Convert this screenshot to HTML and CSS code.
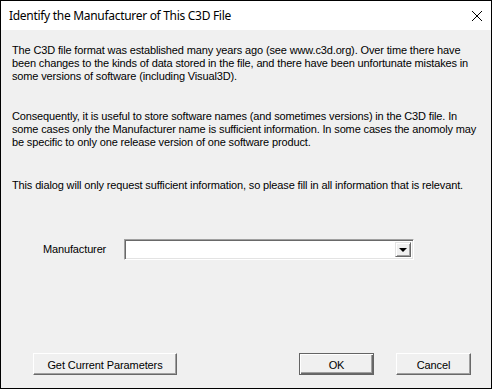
FILE: index.html
```html
<!DOCTYPE html>
<html>
<head>
<meta charset="utf-8">
<link rel="stylesheet" href="styles.css">
</head>
<body>
<div class="window">
  <div class="titlebar">
    <span class="title">Identify the Manufacturer of This C3D File</span>
    <svg class="close" width="12" height="12" viewBox="0 0 12 12"><path d="M1 1 L11 11 M11 1 L1 11" stroke="#000" stroke-width="1" fill="none"/></svg>
  </div>
  <div class="content">
    <p class="para p1">The C3D file format was established many years ago (see www.c3d.org). Over time there have been changes to the kinds of data stored in the file, and there have been unfortunate mistakes in some versions of software (including Visual3D).</p>
    <p class="para p2">Consequently, it is useful to store software names (and sometimes versions) in the C3D file. In some cases only the Manufacturer name is sufficient information. In some cases the anomoly may be specific to only one release version of one software product.</p>
    <p class="para p3">This dialog will only request sufficient information, so please fill in all information that is relevant.</p>
    <div class="field-row">
      <label class="label">Manufacturer</label>
      <div class="combo">
        <div class="combo-text"></div>
        <div class="combo-btn"><span class="arrow"></span></div>
      </div>
    </div>
    <div class="button-row">
      <button class="btn btn-get">Get Current Parameters</button>
      <div class="spacer"></div>
      <button class="btn btn-ok">OK</button>
      <button class="btn btn-cancel">Cancel</button>
    </div>
  </div>
</div>
</body>
</html>
```
FILE: styles.css
```css
html, body {
  margin: 0;
  padding: 0;
  background: #f0f0f0;
}
.window {
  width: 492px;
  height: 389px;
  box-sizing: border-box;
  border: 1px solid #000;
  background: #f0f0f0;
  display: flex;
  flex-direction: column;
}
.titlebar {
  height: 29px;
  background: #fff;
  display: flex;
  align-items: center;
  padding-left: 8px;
  padding-right: 8px;
  flex-shrink: 0;
}
.title {
  font-family: "Noto Sans", sans-serif;
  font-size: 12px;
  letter-spacing: -0.3px;
  color: #000;
  flex: 1;
}
.close {
  display: block;
}
.content {
  flex: 1;
  padding: 14px 11px 0 11px;
  font-family: "Liberation Sans", sans-serif;
  font-size: 11px;
  letter-spacing: -0.14px;
  line-height: 13px;
  color: #000;
  display: flex;
  flex-direction: column;
}
.para {
  margin: 0;
}
.p2 { margin-top: 27px; }
.p3 { margin-top: 30px; }
.field-row {
  display: flex;
  align-items: center;
  margin-top: 47px;
  padding-left: 31px;
}
.label {
  width: 81px;
}
.combo {
  width: 290px;
  height: 21px;
  box-sizing: border-box;
  background: #fff;
  border-top: 1px solid #a0a0a0;
  border-left: 1px solid #a0a0a0;
  border-right: 1px solid #fff;
  border-bottom: 1px solid #fff;
  box-shadow: inset 1px 1px 0 #696969, inset -1px -1px 0 #e3e3e3;
  display: flex;
  justify-content: flex-end;
  align-items: stretch;
  padding: 2px;
}
.combo-btn {
  width: 16px;
  box-sizing: border-box;
  background: #f0f0f0;
  border-top: 1px solid #e3e3e3;
  border-left: 1px solid #e3e3e3;
  border-right: 1px solid #696969;
  border-bottom: 1px solid #696969;
  box-shadow: inset 1px 1px 0 #fff, inset -1px -1px 0 #a0a0a0;
  display: flex;
  align-items: center;
  justify-content: center;
}
.arrow {
  width: 0;
  height: 0;
  border-left: 4px solid transparent;
  border-right: 4px solid transparent;
  border-top: 4px solid #000;
  margin-top: 1px;
}
.button-row {
  display: flex;
  margin-top: 93px;
  padding-left: 21px;
  padding-right: 9px;
}
.spacer { flex: 1; }
.btn {
  font-family: "Liberation Sans", sans-serif;
  font-size: 11px;
  letter-spacing: -0.1px;
  color: #000;
  height: 22px;
  box-sizing: border-box;
  background: #f0f0f0;
  border-top: 1px solid #fff;
  border-left: 1px solid #fff;
  border-right: 1px solid #696969;
  border-bottom: 1px solid #696969;
  box-shadow: inset -1px -1px 0 #a0a0a0;
  padding: 1px 0 0 0;
  margin: 0;
}
.btn-get { width: 144px; }
.btn-ok {
  width: 75px;
  border: 1px solid #646464;
  box-shadow: inset 1px 1px 0 #fff, inset -1px -1px 0 #696969, inset -2px -2px 0 #a0a0a0;
}
.btn-cancel { width: 75px; margin-left: 22px; }
```
